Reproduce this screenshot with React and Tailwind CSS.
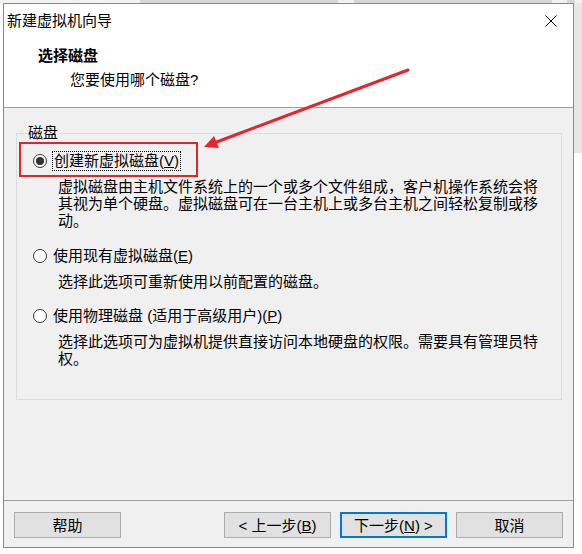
import React from "react";

const FONT = "font-['Liberation_Sans','Noto_Sans_CJK_SC',sans-serif]";

function Radio({ checked }) {
  return (
    <span className="flex h-[14px] w-[14px] shrink-0 items-center justify-center rounded-full border border-[#333333] bg-white">
      {checked && <span className="h-[8px] w-[8px] rounded-full bg-[#333333]" />}
    </span>
  );
}

function Btn({ children, primary }) {
  return (
    <div
      className={
        "flex h-[26px] w-[107px] items-center justify-center bg-[#e1e1e1] text-[15px] leading-none text-black " +
        (primary ? "border-2 border-[#0078d7]" : "border border-[#adadad]")
      }
    >
      {children}
    </div>
  );
}

export default function App() {
  return (
    <div className={"relative h-[554px] w-[582px] overflow-hidden bg-white text-black " + FONT}>
      {/* desktop strip behind window */}
      <div className="flex h-[3px] w-full bg-[#f2f2f2]">
        <div className="ml-[140px] h-full w-[198px] bg-[#d6d6d6]" />
        <div className="ml-[16px] h-full w-[198px] bg-[#d6d6d6]" />
        <div className="ml-[15px] h-full w-[8px] bg-[#d6d6d6]" />
      </div>
      <div className="flex">
        <div className="w-[3px]" />
        {/* window */}
        <div className="flex h-[545px] w-[571px] flex-col border border-[#8a8a8a] bg-[#f0f0f0]">
          {/* title + header */}
          <div className="h-[104px] shrink-0 border-b border-[#a0a0a0] bg-white">
            <div className="flex h-[33px] items-center justify-between pl-[3px] pr-[16px]">
              <span className="text-[15px] leading-[20px]">新建虚拟机向导</span>
              <svg width="12" height="12" viewBox="0 0 12 12">
                <path d="M0.5 0.5 L11.5 11.5 M11.5 0.5 L0.5 11.5" stroke="#000" strokeWidth="1" />
              </svg>
            </div>
            <div className="pl-[34px] pt-[9px] text-[15px] font-bold leading-[20px]">选择磁盘</div>
            <div className="pl-[66px] pt-[4px] text-[15px] leading-[20px]">您要使用哪个磁盘?</div>
          </div>

          {/* body */}
          <div className="flex-1">
            <fieldset className="ml-[12px] mr-[11px] mt-[16px] border border-[#dcdcdc] px-0 pb-[32px]">
              <legend className="ml-[10px] px-[1px] text-[15px] leading-[18px]">磁盘</legend>
              <div className="mt-[9px] flex h-[20px] items-center pl-[16px]">
                <Radio checked />
                <span className="ml-[5px] border border-dotted border-[#000] px-[1px] text-[15px] leading-[18px]">
                  创建新虚拟磁盘(<u>V</u>)
                </span>
              </div>
              <div className="mt-[7px] pl-[41px] text-[15px] leading-[17px]">
                <div className="whitespace-nowrap">虚拟磁盘由主机文件系统上的一个或多个文件组成，客户机操作系统会将</div>
                <div className="whitespace-nowrap">其视为单个硬盘。虚拟磁盘可在一台主机上或多台主机之间轻松复制或移</div>
                <div className="whitespace-nowrap">动。</div>
              </div>
              <div className="mt-[17px] flex h-[20px] items-center pl-[16px]">
                <Radio />
                <span className="ml-[6px] text-[15px] leading-[18px]">
                  使用现有虚拟磁盘(<u>E</u>)
                </span>
              </div>
              <div className="mt-[7px] pl-[41px] text-[15px] leading-[17px]">
                <div className="whitespace-nowrap">选择此选项可重新使用以前配置的磁盘。</div>
              </div>
              <div className="mt-[16px] flex h-[20px] items-center pl-[16px]">
                <Radio />
                <span className="ml-[6px] text-[15px] leading-[18px]">
                  使用物理磁盘 (适用于高级用户)(<u>P</u>)
                </span>
              </div>
              <div className="mt-[7px] pl-[41px] text-[15px] leading-[17px]">
                <div className="whitespace-nowrap">选择此选项可为虚拟机提供直接访问本地硬盘的权限。需要具有管理员特</div>
                <div className="whitespace-nowrap">权。</div>
              </div>
            </fieldset>
          </div>

          {/* footer */}
          <div className="shrink-0 border-t border-[#a0a0a0]">
            <div className="flex items-center pb-[9px] pl-[10px] pr-[10px] pt-[11px]">
              <Btn>帮助</Btn>
              <div className="flex-1" />
              <div className="flex gap-[9px]">
                <Btn>
                  &lt; 上一步(<u>B</u>)
                </Btn>
                <Btn primary>
                  下一步(<u>N</u>) &gt;
                </Btn>
                <Btn>取消</Btn>
              </div>
            </div>
          </div>
        </div>
        <div className="h-[150px] flex-1 bg-[#e6e6e6]" />
      </div>

      {/* annotation overlay */}
      <div className="pointer-events-none absolute left-[19px] top-[142px] h-[35px] w-[179px] border-2 border-[#e0242b]" />
      <svg className="pointer-events-none absolute left-0 top-0" width="582" height="554">
        <line x1="408" y1="70" x2="214" y2="143" stroke="#e5262e" strokeWidth="3" strokeLinecap="round" />
        <polygon points="204,147 219,148 214,136" fill="#e5262e" />
      </svg>
    </div>
  );
}
